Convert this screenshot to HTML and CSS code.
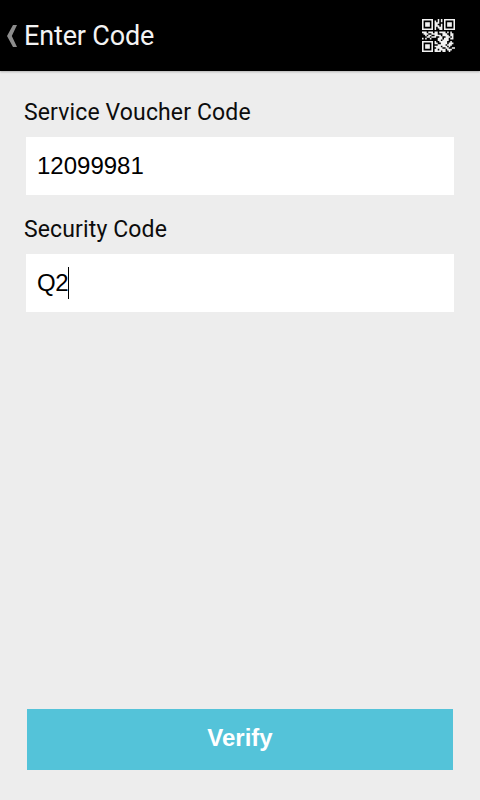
FILE: index.html
```html
<!DOCTYPE html>
<html lang="en">
<head>
<meta charset="utf-8">
<title>Enter Code</title>
<link rel="stylesheet" href="styles.css">
</head>
<body>
<header class="bar">
  <svg class="back" viewBox="0 0 10 22" width="10" height="22"><path d="M10 0H6L0 11l6 11H10L4.8 11z" fill="#8c8c8c"/></svg>
  <h1 class="title">Enter Code</h1>
  <svg class="qr" viewBox="0 0 21 21" width="33" height="33" fill="none" stroke="#f2f2f2">
    <path d="M.5.5h6v6h-6zM14.5.5h6v6h-6zM.5 14.5h6v6h-6z"/>
    <path stroke-width="3" d="M2 3.5h3M16 3.5h3M2 17.5h3"/>
    <path d="M10 .5h1M12 .5h1M8 1.5h1M10 1.5h1M12 1.5h1M8 2.5h3M8 3.5h2M12 3.5h1M8 4.5h3M12 4.5h1M8 5.5h1M10 5.5h3M8 6.5h1M11 6.5h2M0 8.5h3M4 8.5h3M8 8.5h2M11 8.5h4M16 8.5h1M18 8.5h1M1 9.5h3M6 9.5h4M13 9.5h3M18 9.5h2M2 10.5h1M4 10.5h2M8 10.5h4M13 10.5h4M18 10.5h2M3 11.5h2M6 11.5h3M11 11.5h2M15 11.5h3M19 11.5h1M0 12.5h1M2 12.5h1M5 12.5h1M10 12.5h3M14 12.5h3M18 12.5h2M10 13.5h2M13 13.5h4M8 14.5h1M11 14.5h5M18 14.5h1M8 15.5h2M12 15.5h4M17 15.5h3M10 16.5h5M16 16.5h3M8 17.5h4M13 17.5h3M17 17.5h1M9 18.5h4M15 18.5h2M19 18.5h2M8 19.5h2M11 19.5h4M16 19.5h3M8 20.5h4M13 20.5h2M17 20.5h1"/>
  </svg>
</header>
<main class="form">
  <div class="label voucher">Service Voucher Code</div>
  <div class="field"><span>12099981</span></div>
  <div class="label security">Security Code</div>
  <div class="field"><span class="short">Q2</span><i class="caret"></i></div>
  <button class="verify">Verify</button>
</main>
</body>
</html>
```
FILE: styles.css
```css
* { box-sizing: border-box; }
body {
  margin: 0;
  height: 800px;
  display: flex;
  flex-direction: column;
  background: #ededed;
  color: #0c0c0c;
  font-family: Roboto, sans-serif;
}
.bar {
  height: 71px;
  display: flex;
  align-items: center;
  padding: 0 25px 0 7px;
  background: #000;
  box-shadow: 0 1px 2px rgba(0, 0, 0, .25);
}
.back { margin-right: 7px; }
.title {
  margin: 0;
  padding-top: 2px;
  color: #f3f3f3;
  font-size: 27px;
  font-weight: 400;
  line-height: 69px;
  letter-spacing: -.15px;
  white-space: nowrap;
}
.qr { margin-left: auto; }
.form {
  flex: 1;
  display: flex;
  flex-direction: column;
  padding: 26px 26px 30px;
}
.label {
  height: 32px;
  line-height: 32px;
  margin-left: -2px;
  font-size: 23px;
  letter-spacing: .13px;
  white-space: nowrap;
}
.voucher { margin-bottom: 8px; }
.security { margin: 19px 0 8px -2px; }
.field {
  height: 58px;
  display: flex;
  align-items: center;
  padding-left: 11px;
  background: #fff;
  color: #000;
  font-family: "Liberation Sans", sans-serif;
  font-size: 24px;
}
.short { letter-spacing: -.3px; }
.caret {
  width: 1px;
  height: 32px;
  background: #000;
}
.verify {
  height: 61px;
  margin: auto 1px 0;
  padding: 0 0 3px;
  border: 0;
  background: #54c3d9;
  color: #fff;
  font: bold 24px "Liberation Sans", sans-serif;
}
```
